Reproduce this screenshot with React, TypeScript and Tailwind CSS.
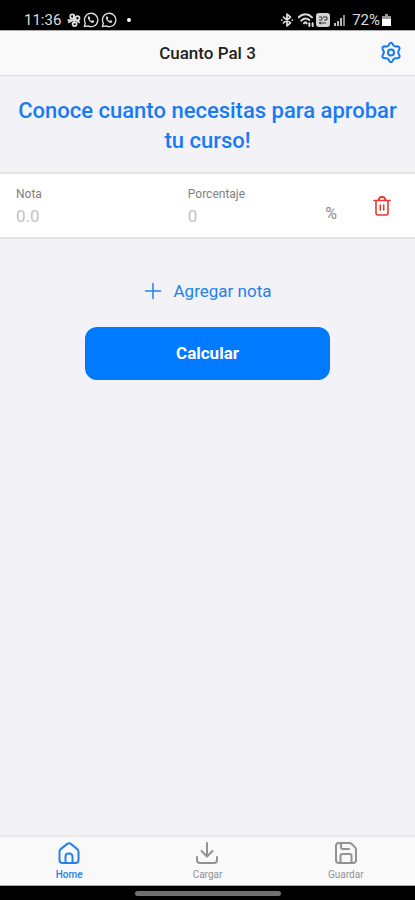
import type { ReactNode } from "react";

type IconProps = { className?: string; children: ReactNode; width?: number };

function Icon({ className, children, width = 2 }: IconProps) {
  return (
    <svg
      viewBox="0 0 24 24"
      fill="none"
      stroke="currentColor"
      strokeWidth={width}
      strokeLinecap="round"
      strokeLinejoin="round"
      aria-hidden="true"
      className={className}
    >
      {children}
    </svg>
  );
}

function WhatsApp() {
  return (
    <Icon className="size-4" width={2}>
      <path d="M2 22l1.500-5.200A10 10 0 1 1 7.400 20.700Z" />
      <path
        d="M8.500 6.500c-2 1.500-1.500 4 .8 6.600 2.500 2.800 5.200 4.100 7.200 2.200.7-.8.5-1.500-.3-2l-1.500-.8c-.7-.3-1.200.7-1.700.9-1.300-.4-2.500-1.600-3-2.700.2-.6 1-1 .7-1.700l-.8-1.900c-.2-.6-.8-.9-1.400-.6Z"
        fill="currentColor"
        stroke="none"
      />
    </Icon>
  );
}

function StatusBar() {
  return (
    <div className="flex h-[30px] shrink-0 items-end justify-between bg-black px-6 pb-px text-[#dedede]">
      <div className="flex items-center gap-[2px]">
        <span className="text-[15px] leading-[18px]">11:36</span>
        <Icon className="ml-1 size-[14px]" width={3}>
          <circle cx="9" cy="6" r="3.500" />
          <circle cx="18" cy="9" r="3.500" />
          <circle cx="13" cy="19" r="3.500" />
          <path d="M2 12h12M12 3v14M3 16l6-3M17 14l4 2" />
        </Icon>
        <WhatsApp />
        <WhatsApp />
        <span className="ml-2 size-1 rounded-full bg-white" />
      </div>
      <div className="flex items-center gap-[2px]">
        <Icon className="size-[14px]" width={3}>
          <path d="m6 7 12 10-6 5V2l6 5L6 17" />
          <path d="M3 12h.1M21 12h.1" />
        </Icon>
        <Icon className="ml-[2px] size-4" width={3}>
          <path d="M1 8c6-6 14-6 20 0M5 13c4-4 8-4 12-1M9 17c2-2 3-2 4 0" />
          <path d="M17 21v-4M22 17v4" />
        </Icon>
        <svg viewBox="0 0 14 14" className="size-[14px]" aria-hidden="true">
          <rect width="14" height="14" rx="3" fill="#d4d4d4" />
          <path d="M3 4h3v3H3m4-3h4v3H8m-4 3h6M5 9l-2 1 2 1" fill="none" stroke="#333" />
        </svg>
        <svg viewBox="0 0 12 12" className="ml-[2px] size-3" aria-hidden="true">
          <path d="M0 12V9h2v3M3 12V7h2v5M6 12V4h2v8" fill="#bbb" />
          <path d="M9 12V1h2v11" fill="#888" />
        </svg>
        <span className="ml-1 text-[15px] leading-[18px]">72%</span>
        <svg viewBox="0 0 9 12" className="h-3 w-[9px]" aria-hidden="true">
          <path d="M3 0h3v2h3v10H0V2h3Z" fill="#999" />
          <path d="M0 5h9v7H0Z" fill="#fff" />
        </svg>
      </div>
    </div>
  );
}

const tabs = [
  {
    label: "Home",
    active: true,
    icon: (
      <>
        <path d="M2.500 10.500a3 3 0 0 1 1.200-2.400l6.500-5.200a3 3 0 0 1 3.600 0l6.500 5.200a3 3 0 0 1 1.200 2.400V19a3 3 0 0 1-3 3h-13a3 3 0 0 1-3-3Z" />
        <path d="M8.500 22v-6.500a3 3 0 0 1 3-3h1a3 3 0 0 1 3 3V22" />
      </>
    ),
  },
  {
    label: "Cargar",
    active: false,
    icon: (
      <>
        <path d="M2 16v3a3 3 0 0 0 3 3h14a3 3 0 0 0 3-3v-3" />
        <path d="M12 2v13M6.500 10l5.500 5.500 5.500-5.500" />
      </>
    ),
  },
  {
    label: "Guardar",
    active: false,
    icon: (
      <>
        <path d="M5 2h10.500a3 3 0 0 1 2 .8l3.600 3.600a3 3 0 0 1 .9 2V19a3 3 0 0 1-3 3H5a3 3 0 0 1-3-3V5a3 3 0 0 1 3-3Z" />
        <path d="M7 2v4a2 2 0 0 0 2 2h6M6.500 22v-7a2 2 0 0 1 2-2h7a2 2 0 0 1 2 2v7" />
      </>
    ),
  },
];

const fieldClass =
  "h-7 w-full min-w-0 text-[17px] outline-none placeholder:text-[#c2c2c2]";

export default function App() {
  return (
    <div className="flex min-h-screen flex-col bg-[#f2f2f7] font-[Roboto,sans-serif]">
      <StatusBar />
      <header className="grid h-[46px] shrink-0 grid-cols-[1fr_auto_1fr] items-center border-t border-b border-t-[#aaa] border-b-[#dedee0] bg-[#f9f9f9] px-3">
        <h1 className="col-start-2 text-[17px] leading-6 font-medium text-[#222]">Cuanto Pal 3</h1>
        <button type="button" aria-label="Ajustes" className="justify-self-end text-[#1678f2]">
          <Icon className="size-6">
            <path d="M10.200 3.200Q12 .4 13.800 3.200l.7 1.300q.7 1 2 .9l1.700-.1q3.400.2 2 3.200l-.8 1.500q-.6 1.200 0 2.400l.9 1.600q1.200 3-2 3.200h-1.800q-1.300 0-2 1.100l-.8 1.500q-1.700 2.800-3.500 0l-.8-1.500q-.7-1.100-2-1.100H5.700q-3.200-.2-2-3.200l.9-1.600q.6-1.200 0-2.400l-.8-1.500q-1.400-3 2-3.200l1.700.1q1.300.1 2-.9Z" />
            <circle cx="12" cy="11.500" r="3" />
          </Icon>
        </button>
      </header>
      <main className="flex flex-1 flex-col">
        <h2 className="px-4 pt-5 pb-4 text-center text-[22px] leading-[30px] font-medium text-[#187bf4]">
          Conoce cuanto necesitas para aprobar tu curso!
        </h2>
        <section className="flex h-[67px] items-center border-y-2 border-[#e3e3e6] bg-white px-4 pt-1">
          <div className="flex flex-5 flex-col">
            <label htmlFor="nota" className="text-xs leading-4 text-[#808080]">Nota</label>
            <input id="nota" placeholder="0.0" inputMode="decimal" className={fieldClass} />
          </div>
          <div className="flex flex-4 flex-col">
            <label htmlFor="porcentaje" className="text-xs leading-4 text-[#808080]">Porcentaje</label>
            <input id="porcentaje" placeholder="0" inputMode="decimal" className={fieldClass} />
          </div>
          <span className="mt-3 mr-9 text-base leading-5 text-[#8c8c8c]">%</span>
          <button type="button" aria-label="Eliminar nota" className="mr-2 mb-1 text-[#e8392e]">
            <svg viewBox="0 0 18 20" fill="none" stroke="currentColor" strokeWidth="1.600" strokeLinecap="round" strokeLinejoin="round" className="h-5 w-[18px]" aria-hidden="true">
              <path d="M1 4.500h16M3 5v12q0 2 2 2h8q2 0 2-2V5M7.300 9v5M10.700 9v5" />
              <path d="M5.500 4l1-2q.4-1 1.500-1h2q1.100 0 1.500 1l1 2" strokeWidth="2" />
            </svg>
          </button>
        </section>
        <button type="button" className="mt-9 flex items-center gap-3 self-center text-[17px] leading-8 text-[#2581eb]">
          <Icon className="size-[18px]">
            <path d="M2 12h20M12 2v20" />
          </Icon>
          Agregar nota
        </button>
        <button type="button" className="mt-5 h-[53px] w-[59%] self-center rounded-xl bg-[#007aff] text-[17px] font-bold text-white">
          Calcular
        </button>
      </main>
      <nav className="grid h-[51px] shrink-0 grid-cols-3 border-t-2 border-b border-t-[#e9e9ec] border-b-[#aaa] bg-[#f9f9f9]">
        {tabs.map((tab) => (
          <a
            key={tab.label}
            href="#"
            aria-current={tab.active ? "page" : undefined}
            className={`flex flex-col items-center pt-1 text-[10px] leading-4 ${tab.active ? "font-medium text-[#2580e7]" : "text-[#929292]"}`}
          >
            <Icon className="mb-[2px] size-6">{tab.icon}</Icon>
            {tab.label}
          </a>
        ))}
      </nav>
      <div className="flex h-[14px] shrink-0 items-center justify-center bg-black">
        <span className="h-[5px] w-[146px] rounded-full bg-[#717171]" />
      </div>
    </div>
  );
}
